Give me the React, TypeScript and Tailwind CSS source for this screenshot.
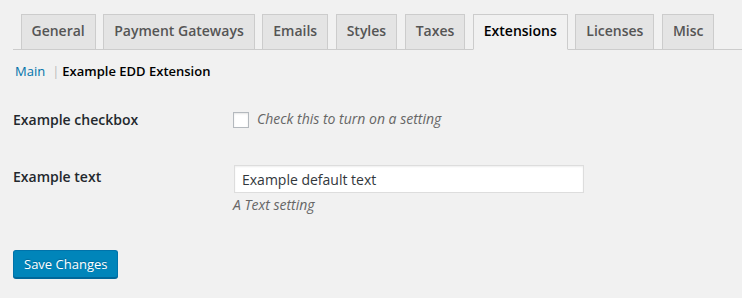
const tabs = [
  { label: 'General' },
  { label: 'Payment Gateways' },
  { label: 'Emails' },
  { label: 'Styles' },
  { label: 'Taxes' },
  { label: 'Extensions', active: true },
  { label: 'Licenses' },
  { label: 'Misc' },
];

function NavTabs() {
  return (
    <div className="ml-[13px] flex border-b border-[#ccc]">
      {tabs.map((t) => (
        <a
          key={t.label}
          className={`-mb-px ml-[7.5px] shrink-0 whitespace-nowrap border border-[#ccc] px-[10px] pt-[4px] pb-[6px] text-[14px] font-semibold leading-6 ${
            t.active
              ? 'border-b-[#f1f1f1] bg-[#f1f1f1] text-black'
              : 'bg-[#e4e4e4] text-[#555]'
          }`}
        >
          {t.label}
        </a>
      ))}
    </div>
  );
}

export default function App() {
  return (
    <div className="min-h-screen bg-[#f1f1f1] pt-[14px] font-['Open_Sans',sans-serif] text-[#444]">
      <NavTabs />

      {/* sub navigation */}
      <div className="ml-[15px] mt-[11px] flex items-center text-[13px] leading-5">
        <a className="text-[#0073aa]">Main</a>
        <span className="ml-[7px] text-[#bbb]">|</span>
        <span className="ml-[3px] font-semibold text-black">Example EDD Extension</span>
      </div>

      {/* form table */}
      <div className="ml-[13px] mt-[27px] flex">
        <div className="w-[220px] pt-[2px] text-[14px] font-semibold leading-5 text-[#23282d]">
          Example checkbox
        </div>
        <div className="flex items-start">
          <span className="mt-[4px] block h-[16px] w-[16px] border border-[#b4b9be] bg-white shadow-[inset_0_1px_2px_rgba(0,0,0,0.1)]" />
          <span className="ml-[8px] pt-[1px] text-[14px] italic leading-5 text-[#666]">
            Check this to turn on a setting
          </span>
        </div>
      </div>

      <div className="ml-[13px] mt-[35px] flex">
        <div className="w-[220px] pt-[2px] text-[14px] font-semibold leading-5 text-[#23282d]">
          Example text
        </div>
        <div className="flex flex-col">
          <div className="ml-px flex h-[28px] w-[350px] items-center border border-[#ddd] bg-white px-[7px] text-[14px] text-[#32373c] shadow-[inset_0_1px_2px_rgba(0,0,0,0.07)]">
            Example default text
          </div>
          <div className="mt-[2px] text-[14px] italic leading-5 text-[#666]">A Text setting</div>
        </div>
      </div>

      <div className="ml-[13px] mt-[35px]">
        <button className="h-[28px] rounded-[3px] border border-[#0073aa] border-b-[#006799] bg-[#0085ba] px-[10px] pb-px text-[13px] leading-[26px] text-white shadow-[0_1px_0_#006799] [text-shadow:0_-1px_1px_#006799]">
          Save Changes
        </button>
      </div>
    </div>
  );
}
